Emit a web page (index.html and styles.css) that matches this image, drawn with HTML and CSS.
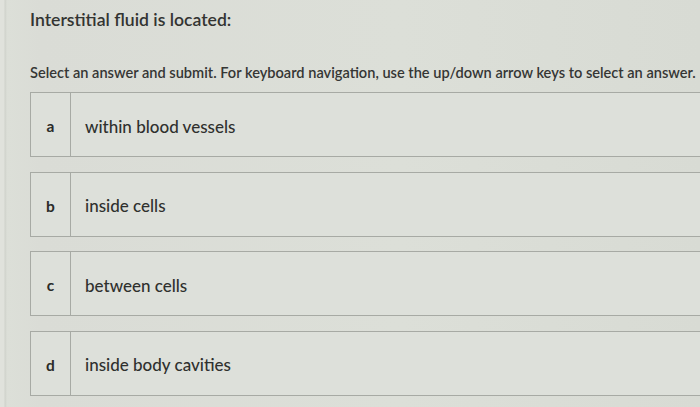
FILE: index.html
```html
<!DOCTYPE html>
<html>
<head>
<meta charset="utf-8">
<link rel="stylesheet" href="styles.css">
</head>
<body>
<div class="page">
  <h1 class="question">Interstitial fluid is located:</h1>
  <p class="instructions">Select an answer and submit. For keyboard navigation, use the up/down arrow keys to select an answer.</p>
  <div class="options">
    <div class="option"><div class="letter">a</div><div class="text">within blood vessels</div></div>
    <div class="option"><div class="letter">b</div><div class="text">inside cells</div></div>
    <div class="option"><div class="letter">c</div><div class="text">between cells</div></div>
    <div class="option"><div class="letter">d</div><div class="text">inside body cavities</div></div>
  </div>
</div>
</body>
</html>
```
FILE: styles.css
```css
html, body {
  margin: 0;
  padding: 0;
}
body {
  width: 700px;
  height: 407px;
  overflow: hidden;
  background: linear-gradient(90deg, #e0e2dc 0, #e0e2dc 4px, #cfd2cb 5px, #dcdfd8 7px, #dadcd6 40px, #dcdfd8 400px, #d8dbd4 700px);
  font-family: Lato, "Open Sans", sans-serif;
  color: #2f302e;
}
.page {
  padding: 8px 0 0 30px;
}
.question {
  margin: 0;
  font-size: 17.6px;
  font-weight: 600;
  line-height: 24px;
  color: #333432;
}
.instructions {
  margin: 32px 0 0 0;
  font-size: 14.6px;
  font-weight: 600;
  line-height: 18px;
  color: #353634;
  white-space: nowrap;
}
.options {
  margin-top: 10px;
  display: flex;
  flex-direction: column;
  gap: 14.5px;
}
.option {
  display: flex;
  height: 63px;
  width: 670px;
  border: 1.5px solid #a7aaa4;
  border-right: none;
  background: #dde0da;
}
.letter {
  width: 39px;
  padding-top: 3px;
  border-right: 1.5px solid #a7aaa4;
  display: flex;
  align-items: center;
  justify-content: center;
  font-size: 15.5px;
  font-weight: 700;
  color: #2a2b29;
}
.text {
  display: flex;
  align-items: center;
  padding: 3px 0 0 14px;
  font-size: 17px;
  font-weight: 500;
  color: #2f302e;
}
```
